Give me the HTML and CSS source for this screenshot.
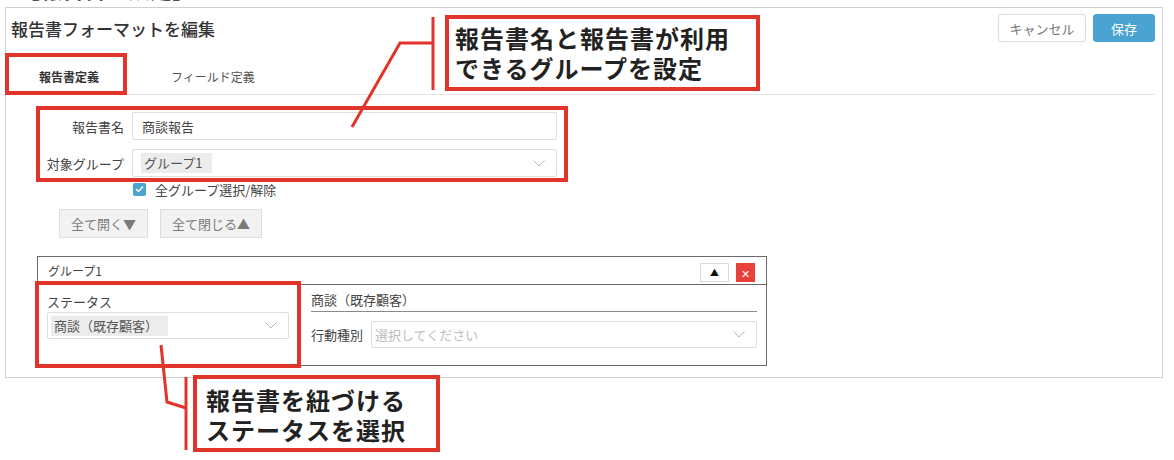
FILE: index.html
```html
<!DOCTYPE html>
<html>
<head>
    <meta charset="utf-8">
    <title>報告書フォーマットを編集</title>
    <link rel="stylesheet" href="styles.css">
</head>
<body>
    <div class="page">
        <div class="slide-title">【報告書の設定】</div>

        <div class="panel">
            <div class="panel-header">
                <h1 class="panel-title">報告書フォーマットを編集</h1>
                <div class="header-buttons">
                    <button class="btn btn-cancel">キャンセル</button>
                    <button class="btn btn-save">保存</button>
                </div>
            </div>

            <div class="tabs">
                <div class="tab active">報告書定義</div>
                <div class="tab">フィールド定義</div>
            </div>

            <div class="form-grid">
                <label class="form-label">報告書名</label>
                <div class="field">商談報告</div>
                <label class="form-label">対象グループ</label>
                <div class="field select">
                    <span class="chip">グループ1</span>
                    <svg class="chevron" width="12" height="7" viewBox="0 0 12 7"><polyline points="0.5,0.5 6,6 11.5,0.5" fill="none" stroke="#b5b5b5" stroke-width="1"/></svg>
                </div>
            </div>
            <div class="check-row">
                <span class="checkbox">
                    <svg width="9" height="8" viewBox="0 0 9 8"><polyline points="1,4 3.5,6.5 8,1.5" fill="none" stroke="#fff" stroke-width="1.4"/></svg>
                </span>
                <span>全グループ選択/解除</span>
            </div>

            <div class="toggle-row">
                <button class="btn btn-gray">全て開く▼</button>
                <button class="btn btn-gray">全て閉じる▲</button>
            </div>

            <div class="group-box">
                <div class="group-header">
                    <span>グループ1</span>
                    <div class="group-actions">
                        <span class="icon-btn up">▲</span>
                        <span class="icon-btn close">✕</span>
                    </div>
                </div>
                <div class="group-body">
                    <div class="group-left">
                        <div class="field-title">ステータス</div>
                        <div class="field select small">
                            <span class="chip">商談（既存顧客）</span>
                            <svg class="chevron" width="12" height="7" viewBox="0 0 12 7"><polyline points="0.5,0.5 6,6 11.5,0.5" fill="none" stroke="#b5b5b5" stroke-width="1"/></svg>
                        </div>
                    </div>
                    <div class="group-right">
                        <div class="status-name">商談（既存顧客）</div>
                        <div class="kind-row">
                            <span class="kind-label">行動種別</span>
                            <div class="field select small placeholder">
                                <span>選択してください</span>
                                <svg class="chevron" width="12" height="7" viewBox="0 0 12 7"><polyline points="0.5,0.5 6,6 11.5,0.5" fill="none" stroke="#b5b5b5" stroke-width="1"/></svg>
                            </div>
                        </div>
                    </div>
                </div>
            </div>
        </div>

        <!-- callouts drawn on top of the screen -->
        <svg class="leader-lines" width="1174" height="460" viewBox="0 0 1174 460">
            <polyline points="352,127 400,43 433,43" fill="none" stroke="#e1352b" stroke-width="3"/>
            <line x1="433" y1="17" x2="433" y2="90" stroke="#e1352b" stroke-width="3"/>
            <polyline points="161,345 167,402 186,408" fill="none" stroke="#e1352b" stroke-width="3"/>
            <line x1="186" y1="377" x2="186" y2="450" stroke="#e1352b" stroke-width="3"/>
        </svg>
        <div class="mark mark-tab"></div>
        <div class="mark mark-form"></div>
        <div class="mark mark-status"></div>
        <div class="note note-top">報告書名と報告書が利用<br>できるグループを設定</div>
        <div class="note note-bottom">報告書を紐づける<br>ステータスを選択</div>
    </div>
</body>
</html>
```

FILE: styles.css
```css
body {
    margin: 0;
    background: #fff;
    font-family: "Noto Sans CJK JP", "Noto Sans", sans-serif;
    color: #333;
}
.page {
    position: relative;
    width: 1174px;
    height: 460px;
    overflow: hidden;
}
.slide-title {
    margin: -25px 0 0 18px;
    height: 26px;
    font-size: 22px;
    line-height: 26px;
    font-weight: 700;
    color: #2b2b2b;
}
.panel {
    margin: 6px 11px 0 5px;
    border: 1px solid #cfcfcf;
    padding: 0 7px 11px 5px;
}
.panel-header {
    display: flex;
    justify-content: space-between;
    align-items: center;
    padding-top: 6px;
    height: 28px;
}
.panel-title {
    margin: 0;
    font-size: 17px;
    font-weight: 500;
    color: #333;
}
.header-buttons {
    display: flex;
    gap: 7px;
}
.btn {
    box-sizing: border-box;
    height: 28px;
    font-family: inherit;
    font-size: 13px;
    border-radius: 3px;
    cursor: pointer;
}
.btn-cancel {
    width: 88px;
    background: #fff;
    border: 1px solid #dcdcdc;
    color: #777;
}
.btn-save {
    width: 62px;
    background: #4ba3d2;
    border: 1px solid #4ba3d2;
    color: #fff;
}
.tabs {
    display: flex;
    gap: 16px;
    margin-top: 18px;
    border-bottom: 1px solid #e4e4e4;
}
.tab {
    padding: 8px 28px 9px;
    font-size: 12px;
    line-height: 17px;
    color: #555;
}
.tab.active {
    font-weight: 700;
    color: #333;
}
.form-grid {
    display: grid;
    grid-template-columns: 113px 425px;
    column-gap: 8px;
    row-gap: 9px;
    align-items: center;
    margin-top: 17px;
}
.form-label {
    text-align: right;
    font-size: 13px;
    color: #444;
}
.field {
    box-sizing: border-box;
    display: flex;
    align-items: center;
    height: 28px;
    padding: 0 9px;
    border: 1px solid #dedede;
    border-radius: 2px;
    font-size: 13px;
    color: #444;
    background: #fff;
}
.select {
    justify-content: space-between;
    padding: 0 11px 0 8px;
}
.select.small {
    height: 27px;
    padding-left: 3px;
}
.placeholder {
    padding-left: 10px;
    color: #bdbdbd;
}
.chip {
    padding: 1px 10px 1px 3px;
    background: #ececec;
    color: #555;
    line-height: 18px;
}
.check-row {
    display: flex;
    align-items: center;
    gap: 9px;
    height: 16px;
    margin: 4px 0 0 122px;
    font-size: 13px;
    color: #444;
}
.checkbox {
    display: flex;
    align-items: center;
    justify-content: center;
    width: 13px;
    height: 13px;
    border-radius: 2px;
    background: #4ba3d2;
}
.toggle-row {
    display: flex;
    gap: 12px;
    margin: 12px 0 0 48px;
}
.btn-gray {
    height: 29px;
    padding: 0 11px;
    background: #f2f2f2;
    border: 1px solid #dedede;
    border-radius: 0;
    color: #7a7a7a;
}
.group-box {
    width: 728px;
    margin: 18px 0 0 26px;
    border: 1px solid #6a6a6a;
}
.group-header {
    display: flex;
    justify-content: space-between;
    align-items: center;
    height: 27px;
    padding: 0 11px 0 10px;
    border-bottom: 1px solid #6a6a6a;
    font-size: 12px;
    color: #444;
}
.group-actions {
    display: flex;
    gap: 7px;
    margin-top: 4px;
}
.icon-btn {
    box-sizing: border-box;
    display: flex;
    align-items: center;
    justify-content: center;
    height: 19px;
    font-size: 9px;
}
.icon-btn.up {
    width: 29px;
    background: #fff;
    border: 1px solid #dcdcdc;
    color: #111;
}
.icon-btn.close {
    width: 19px;
    background: #e8403a;
    color: #fff;
    font-size: 11px;
}
.group-body {
    display: grid;
    grid-template-columns: 262px 1fr;
}
.group-left {
    padding: 8px 11px 17px 9px;
}
.field-title {
    font-size: 13px;
    line-height: 18px;
    color: #444;
    margin-bottom: 1px;
}
.group-right {
    padding: 6px 9px 17px 11px;
}
.status-name {
    height: 20px;
    border-bottom: 1px solid #8a8a8a;
    font-size: 13px;
    line-height: 18px;
    color: #444;
}
.kind-row {
    display: flex;
    align-items: center;
    gap: 8px;
    margin-top: 9px;
}
.kind-label {
    width: 52px;
    font-size: 13px;
    color: #444;
}
.kind-row .field {
    flex: 1;
    height: 27px;
}
.leader-lines {
    position: absolute;
    left: 0;
    top: 0;
    pointer-events: none;
}
.mark {
    position: absolute;
    box-sizing: border-box;
    border: 4px solid #e1352b;
}
.mark-tab {
    left: 5px;
    top: 53px;
    width: 122px;
    height: 42px;
}
.mark-form {
    left: 36px;
    top: 106px;
    width: 532px;
    height: 76px;
}
.mark-status {
    left: 35px;
    top: 281px;
    width: 266px;
    height: 87px;
}
.note {
    position: absolute;
    box-sizing: border-box;
    border: 4px solid #e1352b;
    background: #fff;
    font-size: 24px;
    line-height: 30px;
    font-weight: 700;
    letter-spacing: 1px;
    color: #222;
}
.note-top {
    left: 445px;
    top: 15px;
    width: 315px;
    height: 76px;
    padding: 4px 0 0 6px;
}
.note-bottom {
    left: 193px;
    top: 375px;
    width: 247px;
    height: 77px;
    padding: 6px 0 0 9px;
}
```
